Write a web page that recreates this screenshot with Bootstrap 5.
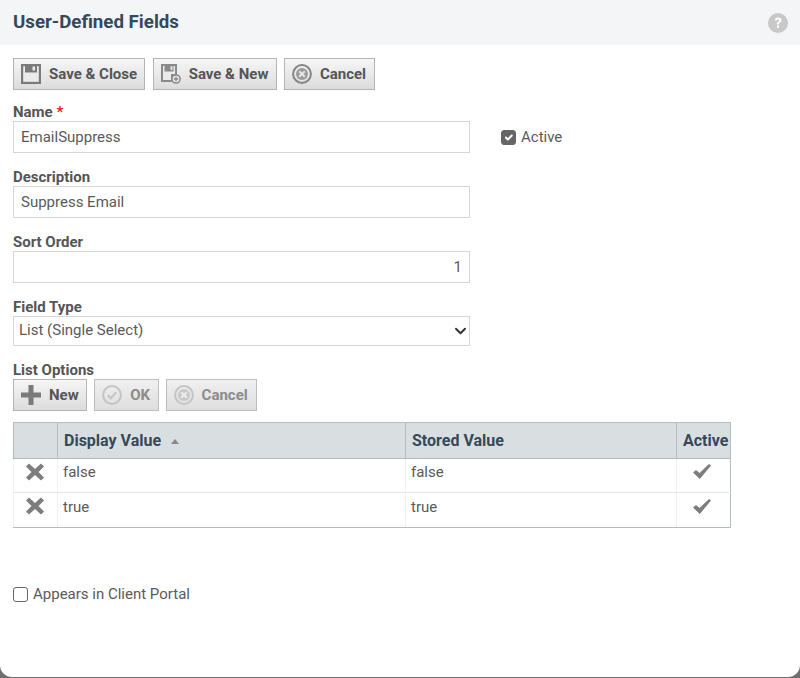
<!DOCTYPE html>
<html lang="en">
<head>
    <meta charset="UTF-8">
    <meta name="viewport" content="width=device-width, initial-scale=1.0">
    <title>User-Defined Fields</title>
    <link href="https://cdn.jsdelivr.net/npm/bootstrap@5.3.3/dist/css/bootstrap.min.css" rel="stylesheet">
    <style>
        html, body {
            height: 100%;
        }
        body {
            background-color: #6f6f6f;
            font-family: Roboto, "Liberation Sans", sans-serif;
            font-size: 15px;
            color: #5a5a5a;
            overflow: hidden;
        }
        .panel {
            height: 677px;
            background-color: #fff;
            border-radius: 0 0 12px 12px;
        }
        .panel-head {
            height: 45px;
            background-color: #f4f5f7;
            padding: 0 12px 0 13px;
        }
        .panel-head h1 {
            font-size: 18.7px;
            font-weight: 700;
            color: #34495a;
            margin: 0;
        }
        .panel-body {
            padding: 13px 13px 0;
        }
        .tool-btn {
            display: flex;
            align-items: center;
            height: 32px;
            padding: 0 7.5px 0 7px;
            gap: 8px;
            font-size: 15px;
            font-weight: 700;
            line-height: 1;
            color: #555;
            background: linear-gradient(#f6f6f6, #dcdcdc);
            border: 1px solid #b4b4b4;
            border-radius: 0;
        }
        .tool-btn.tight {
            padding-right: 6.5px;
        }
        .tool-btn.loose {
            padding-right: 8.5px;
        }
        .tool-btn:disabled {
            color: #8c8c8c;
            opacity: 1;
            border-color: #bdbdbd;
            background: linear-gradient(#f0f0f0, #dedede);
        }
        .field-label {
            display: block;
            height: 18px;
            line-height: 18px;
            margin: 0;
            font-weight: 700;
            color: #555;
        }
        .field-label .req {
            color: #e02020;
        }
        .field-row {
            margin-bottom: 15px;
        }
        .field-box {
            width: 457px;
        }
        .form-control.plain, .form-select.plain {
            height: 32px;
            padding: 0 7px;
            font-size: 15px;
            color: #5a5a5a;
            border: 1px solid #d6d6d6;
            border-radius: 0;
            box-shadow: none;
        }
        .form-select.plain {
            height: 30px;
            padding: 0 0 2px 5px;
            background-image: url("data:image/svg+xml,%3csvg xmlns='http://www.w3.org/2000/svg' viewBox='0 0 16 16'%3e%3cpath fill='none' stroke='%23333' stroke-linecap='round' stroke-linejoin='round' stroke-width='2.600' d='M2 5l6 6 6-6'/%3e%3c/svg%3e");
            background-position: right 1px center;
            background-size: 15px 12px;
        }
        .check-box.form-check-input {
            width: 15px;
            height: 15px;
            margin: 0;
            border: 1px solid #666;
            border-radius: 3px;
        }
        .check-box.form-check-input:checked {
            background-color: #666;
            border-color: #666;
        }
        .opts {
            table-layout: fixed;
            width: 717px;
            margin: 11px 0 0;
            border: 1px solid #b3bcc2;
            border-collapse: collapse;
            color: #5a5a5a;
            font-size: 15px;
        }
        .opts th {
            height: 36px;
            padding: 0 6px;
            background-color: #d9dfe1;
            color: #34495a;
            font-size: 16px;
            font-weight: 700;
            border: 0;
            border-bottom: 1px solid #b3bcc2;
            border-left: 1px solid #b3bcc2;
            vertical-align: middle;
            white-space: nowrap;
        }
        .opts td {
            height: 35px;
            padding: 2px 5px 8px;
            border: 0;
            border-bottom: 1px solid #e6e6e6;
            border-left: 1px solid #f2f2f2;
            vertical-align: middle;
            background: #fff;
        }
        .opts tbody tr:first-child td {
            height: 34px;
        }
        .opts tbody tr:last-child td {
            border-bottom: 1px solid #b3bcc2;
        }
        .opts td.ico {
            padding: 0 1px 9px 0;
            text-align: center;
        }
        .opts td.ico-check {
            padding-right: 3px;
        }
        .sort-up {
            display: inline-block;
            margin-left: 6px;
            border-left: 4px solid transparent;
            border-right: 4px solid transparent;
            border-bottom: 5px solid #888;
            vertical-align: 2px;
        }
        .portal {
            margin-top: 55px;
        }
        .active-check {
            margin-left: 31px;
            gap: 5px;
        }
        .active-check label {
            padding-top: 1px;
        }
    </style>
</head>
<body>
    <div class="panel">
        <div class="panel-head d-flex align-items-center justify-content-between">
            <h1>User-Defined Fields</h1>
            <svg width="20" height="20" viewBox="0 0 20 20"><circle cx="10" cy="10" r="10" fill="#c8c8c8"/><path d="M6.800 7.600C6.900 5.600 8.200 4.600 10.100 4.600c2 0 3.300 1.100 3.300 2.700 0 1.200-.6 1.900-1.600 2.500-.8.500-1 .8-1 1.600H9c-.1-1.300.3-2 1.200-2.600.8-.5 1.200-.9 1.200-1.400 0-.6-.5-1-1.300-1-.9 0-1.400.5-1.500 1.200z M9 12.600h2v2.200H9z" fill="#fff"/></svg>
        </div>
        <div class="panel-body">
            <div class="d-flex" style="gap:8px">
                <button type="button" class="btn tool-btn tight">
                    <svg width="20" height="20" viewBox="0 0 20 20"><path d="M0 0h20v20H0z" fill="#7a7a7a"/><path d="M2.200 2.200v15.600h15.600V2.200z" fill="#ebebeb"/><path d="M4 1h12v7.500H4z" fill="#7a7a7a"/><path d="M11.500 2.500H14v4h-2.500z" fill="#ebebeb"/></svg>
                    Save &amp; Close
                </button>
                <button type="button" class="btn tool-btn" style="margin-right:-1px">
                    <svg width="20" height="20" viewBox="0 0 20 20"><path d="M0 0h16v11h-4v7H0z" fill="#8a8a8a"/><path d="M2 2v14h8v-6h4V2z" fill="#ebebeb"/><path d="M3.500 1h9v6.500h-9z" fill="#8a8a8a"/><path d="M9.500 2.300h2v3.500h-2z" fill="#ebebeb"/><circle cx="15" cy="15" r="4.800" fill="#8a8a8a"/><circle cx="15" cy="15" r="3.300" fill="#ebebeb"/><path d="M14.300 12.800h1.400v1.500h1.500v1.400h-1.500v1.500h-1.400v-1.500h-1.500v-1.400h1.500z" fill="#8a8a8a"/></svg>
                    Save &amp; New
                </button>
                <button type="button" class="btn tool-btn">
                    <svg width="20" height="20" viewBox="0 0 20 20"><circle cx="10" cy="10" r="8.900" fill="none" stroke="#858585" stroke-width="2"/><circle cx="10" cy="10" r="6" fill="#9a9a9a"/><path d="M7.200 7.200l5.600 5.600M12.800 7.200l-5.600 5.600" stroke="#e6e6e6" stroke-width="2"/></svg>
                    Cancel
                </button>
            </div>

            <div class="field-row" style="margin-top:13px">
                <label class="field-label" for="nameInput">Name <span class="req">*</span></label>
                <div class="d-flex align-items-center">
                    <div class="field-box"><input id="nameInput" type="text" class="form-control plain" value="EmailSuppress"></div>
                    <div class="active-check d-flex align-items-center">
                        <input class="form-check-input check-box" type="checkbox" id="activeCheck" checked>
                        <label for="activeCheck">Active</label>
                    </div>
                </div>
            </div>

            <div class="field-row">
                <label class="field-label" for="descInput">Description</label>
                <div class="field-box"><input id="descInput" type="text" class="form-control plain" value="Suppress Email"></div>
            </div>

            <div class="field-row">
                <label class="field-label" for="sortInput">Sort Order</label>
                <div class="field-box"><input id="sortInput" type="text" class="form-control plain text-end" value="1"></div>
            </div>

            <div class="field-row">
                <label class="field-label" for="typeSelect">Field Type</label>
                <div class="field-box">
                    <select id="typeSelect" class="form-select plain">
                        <option>List (Single Select)</option>
                    </select>
                </div>
            </div>

            <label class="field-label">List Options</label>
            <div class="d-flex" style="gap:7px">
                <button type="button" class="btn tool-btn">
                    <svg width="20" height="20" viewBox="0 0 20 20"><path d="M7.500 0h5v7.500H20v5h-7.500V20h-5v-7.500H0v-5h7.500z" fill="#7a7a7a"/></svg>
                    New
                </button>
                <button type="button" class="btn tool-btn" disabled>
                    <svg width="20" height="20" viewBox="0 0 20 20"><circle cx="10" cy="10" r="8.900" fill="none" stroke="#c4c4c4" stroke-width="2"/><path d="M5.800 10.200l3 3 5.400-6" fill="none" stroke="#c4c4c4" stroke-width="2"/></svg>
                    OK
                </button>
                <button type="button" class="btn tool-btn loose" disabled>
                    <svg width="20" height="20" viewBox="0 0 20 20"><circle cx="10" cy="10" r="8.900" fill="none" stroke="#c4c4c4" stroke-width="2"/><circle cx="10" cy="10" r="6" fill="#c8c8c8"/><path d="M7.200 7.200l5.600 5.600M12.800 7.200l-5.600 5.600" stroke="#eee" stroke-width="2"/></svg>
                    Cancel
                </button>
            </div>

            <table class="table opts">
                <colgroup>
                    <col style="width:44px">
                    <col style="width:348px">
                    <col style="width:271px">
                    <col style="width:54px">
                </colgroup>
                <thead>
                    <tr>
                        <th></th>
                        <th>Display Value <span class="sort-up"></span></th>
                        <th>Stored Value</th>
                        <th>Active</th>
                    </tr>
                </thead>
                <tbody>
                    <tr>
                        <td class="ico"><svg width="18" height="18" viewBox="0 0 18 18"><path d="M3 .5l6 5.500L15 .5l3 3L12.500 9l5.500 5.500-3 3-6-5.500-6 5.500-3-3L5.500 9 0 3.500z" fill="#7d7d7d"/></svg></td>
                        <td>false</td>
                        <td>false</td>
                        <td class="ico ico-check"><svg width="18" height="15" viewBox="0 0 18 15"><path d="M0 8.500l3-2.500 3.500 3L16 0l2 1.500L6.800 15z" fill="#7d7d7d"/></svg></td>
                    </tr>
                    <tr>
                        <td class="ico"><svg width="18" height="18" viewBox="0 0 18 18"><path d="M3 .5l6 5.500L15 .5l3 3L12.500 9l5.500 5.500-3 3-6-5.500-6 5.500-3-3L5.500 9 0 3.500z" fill="#7d7d7d"/></svg></td>
                        <td>true</td>
                        <td>true</td>
                        <td class="ico ico-check"><svg width="18" height="15" viewBox="0 0 18 15"><path d="M0 8.500l3-2.500 3.500 3L16 0l2 1.500L6.800 15z" fill="#7d7d7d"/></svg></td>
                    </tr>
                </tbody>
            </table>

            <div class="portal d-flex align-items-center" style="gap:5px">
                <input class="form-check-input check-box" type="checkbox" id="portalCheck">
                <label for="portalCheck">Appears in Client Portal</label>
            </div>
        </div>
    </div>
    <script src="https://cdn.jsdelivr.net/npm/bootstrap@5.3.3/dist/js/bootstrap.bundle.min.js"></script>
</body>
</html>
